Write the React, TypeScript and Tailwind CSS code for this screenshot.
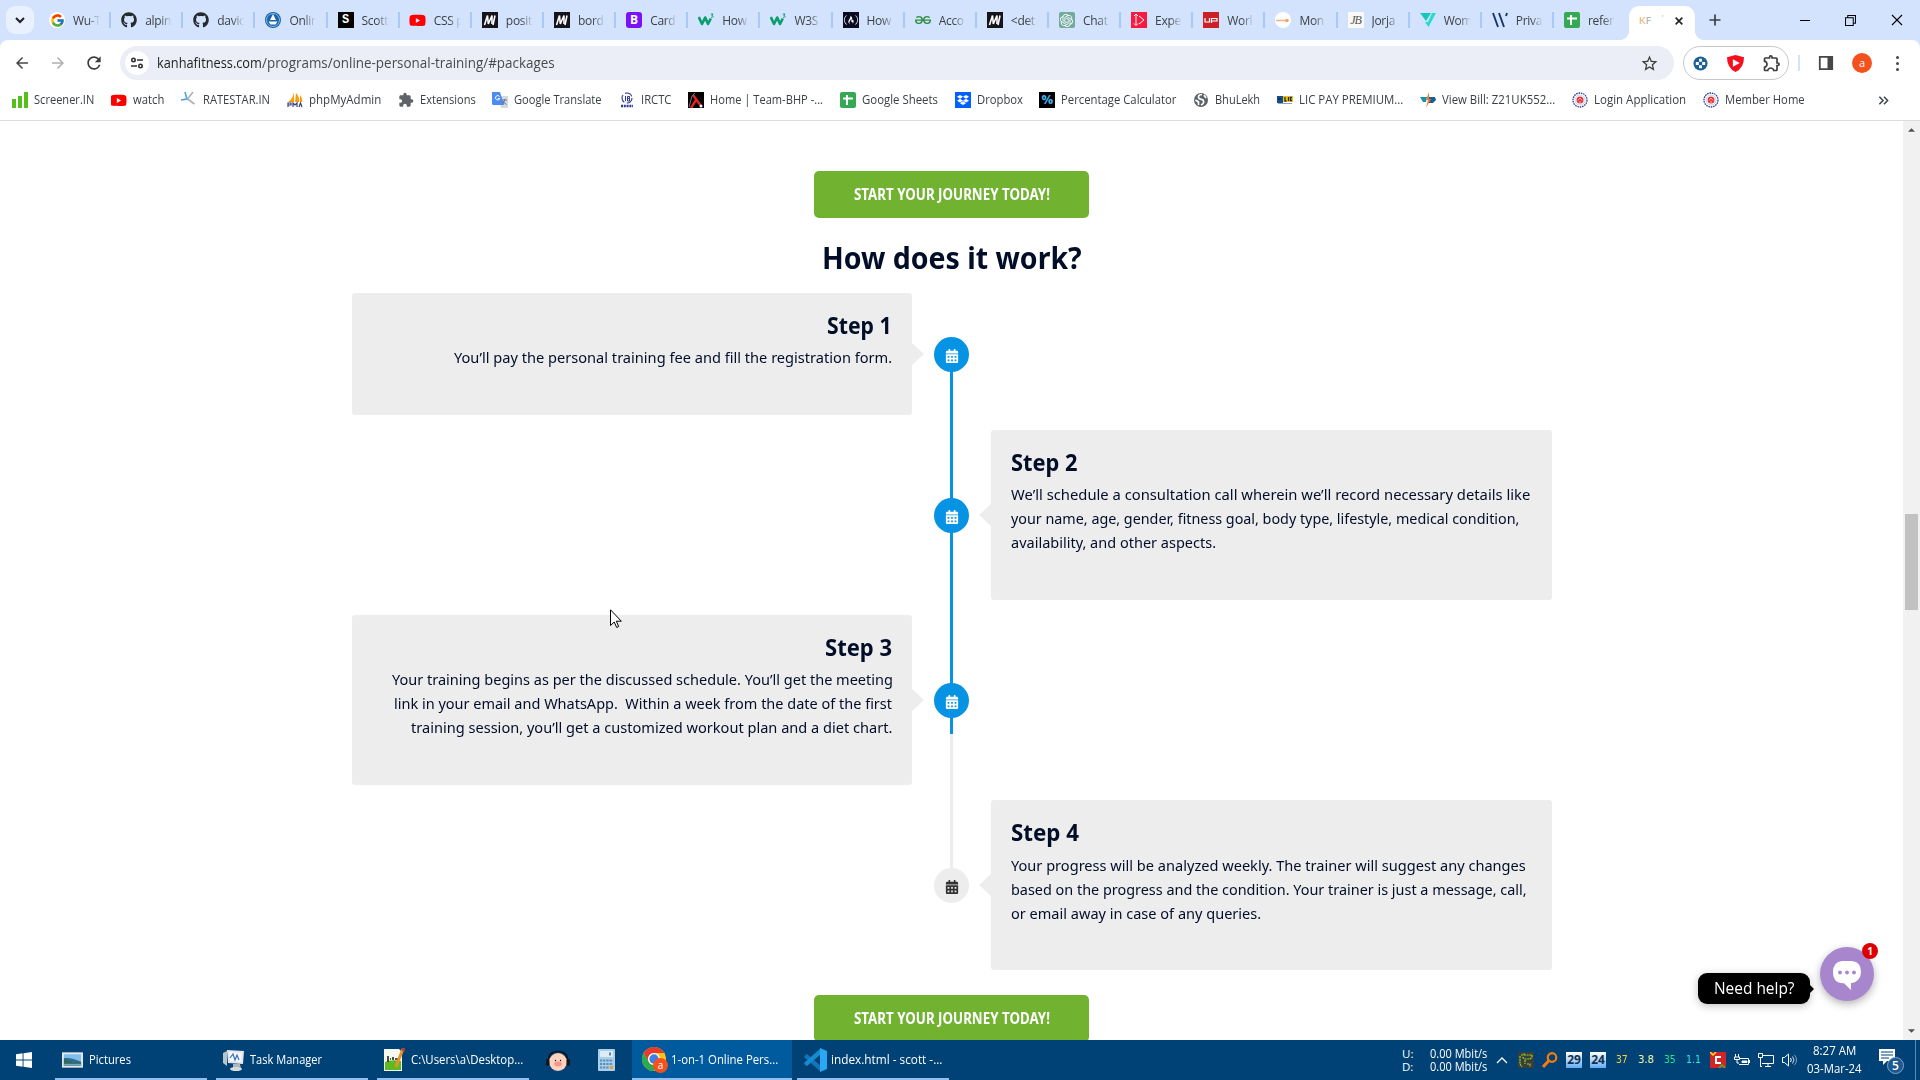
import { useLayoutEffect, useRef, useState, type ReactNode } from "react";
import { FaCalendarAlt, FaFreeCodeCamp, FaGithub, FaYoutube, FaDropbox } from "react-icons/fa";
import { FcGoogle } from "react-icons/fc";
import { SiGeeksforgeeks, SiOpenai } from "react-icons/si";
import { MdExtension, MdOutlineExtension, MdStarBorder, MdRefresh, MdArrowBack, MdArrowForward } from "react-icons/md";

/* Condenses or widens one line of text so that it takes exactly w pixels. */
function Fit({ w, children, className = "", right = false }: { w: number; children: string; className?: string; right?: boolean }) {
  const ref = useRef<HTMLSpanElement>(null);
  const [scale, setScale] = useState(1);
  useLayoutEffect(() => {
    if (ref.current) setScale(w / ref.current.offsetWidth);
  }, [w, children]);
  return (
    <span className={`flex shrink-0 whitespace-pre ${right ? "ml-auto" : ""} ${className}`} style={{ width: w }}>
      <span ref={ref} className="inline-block shrink-0 origin-left" style={{ transform: `scaleX(${scale})` }}>
        {children}
      </span>
    </span>
  );
}

function Sq({ className, children }: { className: string; children?: ReactNode }) {
  return <span className={`flex size-4 shrink-0 items-center justify-center overflow-hidden ${className}`}>{children}</span>;
}

const mdn = (
  <Sq className="bg-[#15141a]">
    <svg viewBox="0 0 16 16" className="size-4" fill="none" stroke="#fff" strokeWidth="1.6">
      <path d="M2.5 13 5.5 3.5 6.3 12 10 3.5 10 12" />
      <path d="M13 3.5 11 13" />
    </svg>
  </Sq>
);
const w3 = (
  <Sq className="">
    <svg viewBox="0 0 16 16" className="size-4" fill="none" stroke="#0a9e6c">
      <path d="M.8 5 4 12 7.2 5.5 10 12 12.8 6.5" strokeWidth="2.6" strokeLinejoin="round" />
      <path d="M12.8 2h2.2l-1.2 1.5c2 0 1.6 2.3-.8 1.8" strokeWidth="1" />
    </svg>
  </Sq>
);
const sheets = (
  <Sq className="rounded-[2px] bg-[#34a853]">
    <svg viewBox="0 0 16 16" className="size-4" fill="none" stroke="#fff" strokeWidth="2">
      <path d="M3 6.5h10M7 3v10" />
    </svg>
  </Sq>
);
const youtube = <FaYoutube className="size-[17px] shrink-0 text-[#f00]" />;
const seal = (
  <svg viewBox="0 0 16 16" className="size-4 shrink-0" fill="none">
    <circle cx="8" cy="8" r="7" stroke="#2b3990" strokeWidth="1.3" strokeDasharray="1.6 .8" />
    <circle cx="8" cy="8" r="5" stroke="#b5c4e2" strokeWidth=".8" />
    <circle cx="8" cy="8" r="3.5" fill="#e3363c" />
    <path d="M6 8.5 8 6l2 2.500M7 10h2" stroke="#f7b6b0" />
  </svg>
);

const tabs: [ReactNode, string][] = [
  [<Sq className="rounded-full bg-white"><FcGoogle className="size-[15px]" /></Sq>, "Wu-T"],
  [<FaGithub className="size-4 text-[#24292f]" />, "alpin"],
  [<FaGithub className="size-4 text-[#24292f]" />, "davic"],
  [
    <Sq className="rounded-full bg-[#1664ae]">
      <svg viewBox="0 0 16 16" className="size-4" fill="#fff"><path d="M8 2 11 8H5zM3.5 9.5h9l-2 3h-5z" /><circle cx="8" cy="8" r="6.5" fill="none" stroke="#8db8e0" /></svg>
    </Sq>,
    "Onlin",
  ],
  [<Sq className="bg-black font-mono text-[12px] font-bold text-white">S</Sq>, "Scott"],
  [youtube, "CSS p"],
  [mdn, "posit"],
  [mdn, "bord"],
  [<Sq className="rounded-[3px] bg-[#7a12f7] text-[12px] font-bold text-white">B</Sq>, "Card"],
  [w3, "How"],
  [w3, "W3S"],
  [<Sq className="bg-[#0a0a23]"><FaFreeCodeCamp className="size-[14px] text-white" /></Sq>, "How"],
  [<SiGeeksforgeeks className="size-4 text-[#2f8d46]" />, "Acco"],
  [mdn, "<det"],
  [<Sq className="rounded-[2px] bg-[#74aa9c]"><SiOpenai className="size-[13px] text-white" /></Sq>, "Chat"],
  [
    <Sq className="bg-[#fa1a40]">
      <svg viewBox="0 0 16 16" className="size-4" fill="none" stroke="#fff"><path d="M5 2v11M3 4l2-2 2 2M3 11.5l2 2 2-2M8 4l5 4-5 4" /></svg>
    </Sq>,
    "Expe",
  ],
  [
    <Sq className="bg-[#cc2027]">
      <svg viewBox="0 0 16 16" className="size-4" fill="none" stroke="#fff" strokeWidth="1.2"><path d="M2 6v4h4.5V6M8.500 11V6.500H14V9H9" /></svg>
    </Sq>,
    "Worl",
  ],
  [
    <Sq className="rounded-full bg-white">
      <svg viewBox="0 0 16 16" className="size-4"><path d="M1 8.500h11" stroke="#f5b183" strokeWidth="1.500" /><circle cx="12" cy="8.500" r="1.800" fill="#f5a36b" /></svg>
    </Sq>,
    "Mon",
  ],
  [<Sq className="bg-[#faf9f7] font-['Liberation_Serif'] text-[12px] italic tracking-[-1px] text-[#555]">JB</Sq>, "Jorja"],
  [
    <svg viewBox="0 0 16 16" className="size-4"><path d="M0 1h11L6 9z" fill="#16c9b7" /><path d="M12 1h4L8.500 15 5 10h3z" fill="#27dccb" /></svg>,
    "Wom",
  ],
  [
    <svg viewBox="0 0 16 16" className="size-4" fill="none" stroke="#16356e" strokeWidth="1.900"><path d="M1 1 6 15M7 1l5 14M15 1l-1 3" /></svg>,
    "Priva",
  ],
  [sheets, "refer"],
];

const bookmarks: [ReactNode, string, number][] = [
  [
    <svg viewBox="0 0 16 16" className="size-4 shrink-0"><path d="M0 7h4v9H0zM6 4h4v12H6zM12 0h4v16h-4z" fill="#55c01c" /></svg>,
    "Screener.IN", 60,
  ],
  [<Sq className="">{youtube}</Sq>, "watch", 31],
  [
    <svg viewBox="0 0 16 16" className="size-4 shrink-0" fill="none"><path d="M4 0 6 7 0 8" stroke="#3fa4dc" strokeWidth="1.600" /><path d="M12 0 6.500 7l7 5" stroke="#aab0b8" strokeWidth="1.600" /></svg>,
    "RATESTAR.IN", 67,
  ],
  [
    <svg viewBox="0 0 16 16" className="size-4 shrink-0"><path d="M7 0v10H1q5-3 6-10M9 1q4 4 3 9H8zM13 3q3 4 2 7h-2z" fill="#f89c0e" /><path d="M1 15v-4h3v2H1M6 15v-4l2 2 2-2v4M12 15l1.500-4 1.500 4" stroke="#3b3f73" strokeWidth="1.200" fill="none" /></svg>,
    "phpMyAdmin", 72,
  ],
  [<MdExtension className="size-4 shrink-0 text-[#5f6368]" />, "Extensions", 55.5],
  [
    <svg viewBox="0 0 16 16" className="size-4 shrink-0"><path d="M6 4h10v12H9z" fill="#d5d8dc" /><path d="M0 0h8l4 13H1l-1-1z" fill="#4c8bf5" /><path d="M7.500 4.500a2.200 2.200 0 1 0 .3 2H5.800" stroke="#fff" fill="none" /><path d="M10 8h5M12.500 7v1.500q-1 3-2.500 4M11 9q1 2 3.500 3.500" stroke="#60758d" fill="none" /></svg>,
    "Google Translate", 88,
  ],
  [
    <svg viewBox="0 0 16 16" className="size-4 shrink-0" fill="none" stroke="#2c3690"><circle cx="8" cy="6" r="5" strokeDasharray="8 2.500" strokeWidth="1.100" /><path d="M6.500 4v5M8.500 4.500h2v2h-2zM8.500 6.500h2V9h-2z" /><path d="M2 14h12" strokeWidth="2.500" strokeDasharray="2 .8" /></svg>,
    "IRCTC", 30,
  ],
  [
    <Sq className="bg-black"><svg viewBox="0 0 16 16" className="size-4" fill="none"><path d="M5 3 13 14M3 16 8 8" stroke="#e02222" strokeWidth="2.400" /><circle cx="13" cy="14" r="1.500" fill="#fff" /><path d="M1 15 4 4l3-3" stroke="#777" /></svg></Sq>,
    "Home | Team-BHP -...", 113,
  ],
  [sheets, "Google Sheets", 76],
  [<Sq className="bg-[#0061ff]"><FaDropbox className="size-[12px] text-white" /></Sq>, "Dropbox", 46],
  [<Sq className="bg-black text-[13px] font-bold text-[#43b5f2]">%</Sq>, "Percentage Calculator", 115],
  [
    <svg viewBox="0 0 16 16" className="size-4 shrink-0"><circle cx="8" cy="8" r="7" fill="#5f6368" /><path d="M9 2.500Q4 3 6 6.500l4 1.500q2 3-2 5M11 3l2 3M2.500 8l3 2v3" stroke="#fff" strokeWidth="1.700" fill="none" /></svg>,
    "BhuLekh", 45,
  ],
  [
    <svg viewBox="0 0 16 16" className="size-4 shrink-0"><path d="M0 4h6v7H0z" fill="#12508f" /><path d="M6 4h10v6H6z" fill="#f4c20f" /><path d="M1 7h3M8 5v4h1.500M11.500 5v4M15 5.500h-1.500v3H15" stroke="#1d2d50" fill="none" strokeWidth="1.300" /><path d="M1 11.500h14" stroke="#8aa4c4" /></svg>,
    "LIC PAY PREMIUM...", 104,
  ],
  [
    <svg viewBox="0 0 16 16" className="size-4 shrink-0"><path d="M0 5h7l-1 5H3z" fill="#1592b0" /><path d="M9 5h6l1 3-3 3H9z" fill="#1d5f91" /><path d="M9 0 6 8h2l-2 8 5-9H9z" fill="#ee7a2b" /></svg>,
    "View Bill: Z21UK552...", 113,
  ],
  [seal, "Login Application", 92],
  [seal, "Member Home", 80],
];

function TabStrip() {
  return (
    <div className="flex h-10 bg-[#d3e3fd]">
      <div className="ml-[6px] mt-[6px] flex h-7 w-7 shrink-0 items-center justify-center rounded-[9px] bg-[#e9f0fe]">
        <svg viewBox="0 0 12 12" className="size-3" fill="none" stroke="#1f1f1f" strokeWidth="2"><path d="M2 4l4 4 4-4" /></svg>
      </div>
      <div className="ml-[5px] flex shrink-0">
        {tabs.map(([icon, label], i) => (
          <div key={i} className="flex h-10 w-[72.15px] shrink-0 items-center pl-[10px]">
            <span className="flex w-4 shrink-0 justify-center">{icon}</span>
            <span className="ml-2 mt-[2px] w-[27px] whitespace-nowrap text-[12px] leading-[18px] tracking-[-0.3px] text-[#3c4043] [mask-image:linear-gradient(to_right,black_55%,transparent)]">
              {label}
            </span>
            <span className={`ml-auto h-4 w-[2px] ${i === 21 ? "bg-transparent" : "bg-[#a8c7fa]"}`} />
          </div>
        ))}
      </div>
      <div className="relative ml-[3px] mt-[6px] flex h-[34px] w-[66px] shrink-0 items-center rounded-t-[10px] bg-white pb-[5px] pl-[10px] text-[9px] before:absolute before:bottom-0 before:-left-[10px] before:size-[10px] before:bg-[radial-gradient(circle_at_0_0,transparent_10px,white_10.500px)] after:absolute after:-right-[10px] after:bottom-0 after:size-[10px] after:bg-[radial-gradient(circle_at_100%_0,transparent_10px,white_10.500px)]">
        <span className="font-['Lato'] text-[10px] text-[#e9b15c]">K</span>
        <span className="font-['Lato'] text-[10px] text-[#aaa]">F</span>
        <span className="-mt-1 ml-[10px] text-[#bbb]">'</span>
        <svg viewBox="0 0 12 12" className="ml-[11px] size-[10px]" stroke="#1f1f1f" strokeWidth="1.900"><path d="M2 2l8 8M10 2l-8 8" /></svg>
      </div>
      <svg viewBox="0 0 12 12" className="ml-[14px] mt-[14px] size-3" stroke="#3c4043" strokeWidth="1.700"><path d="M6 .5v11M.5 6h11" /></svg>
      <div className="ml-auto mr-[17px] flex h-10 items-center gap-[35px]">
        <span className="h-px w-[10px] bg-black" />
        <svg viewBox="0 0 12 12" className="size-[11px]" fill="none" stroke="#000" strokeWidth="1.100"><path d="M.6 3h8.400v8.400H.6zM3 3V.6h8.400V9H9" /></svg>
        <svg viewBox="0 0 12 12" className="size-3" stroke="#000" strokeWidth="1.100"><path d="M1 1l10 10M11 1 1 11" /></svg>
      </div>
    </div>
  );
}

function Toolbar() {
  return (
    <div className="bg-[#d3e3fd]">
      <div className="flex h-[43px] items-center rounded-t-[8px] bg-white pt-[3px]">
        <MdArrowBack className="ml-[13px] size-[18px] text-[#474747]" />
        <MdArrowForward className="ml-[18px] size-[18px] text-[#b0b0b0]" />
        <MdRefresh className="ml-[17px] size-[20px] text-[#3c3c3c]" />
        <div className="ml-4 flex h-[34px] w-[1554px] items-center rounded-full bg-[#ebeef7] pl-[5px]">
          <span className="flex size-6 items-center justify-center rounded-full bg-white">
            <svg viewBox="0 0 14 14" className="size-[14px]" fill="none" stroke="#303030" strokeWidth="1.600"><circle cx="3.500" cy="4" r="1.700" /><path d="M7 4h6M1 10h6" /><circle cx="10.500" cy="10" r="1.700" /></svg>
          </span>
          <Fit w={105} className="mb-px ml-[8px] text-[14px] text-[#1f1f1f]">kanhafitness.com</Fit>
          <Fit w={292.500} className="mb-px text-[14px] text-[#4a4a4f]">/programs/online-personal-training/#packages</Fit>
          <MdStarBorder className="ml-auto mr-[15px] size-[19px] text-[#3c3c3c]" />
        </div>
        <div className="ml-[9px] flex h-[34px] w-[106px] items-center justify-between rounded-full border border-[#c7c7c7] pl-[9px] pr-[6px]">
          <svg viewBox="0 0 16 16" className="size-[15px]"><circle cx="8" cy="8" r="7.500" fill="#1b6290" /><path d="M8 3v3.200M8 9.800V13M3 8h3.200M9.800 8H13" stroke="#fff" strokeWidth="3" /></svg>
          <svg viewBox="0 0 16 16" className="size-[17px]"><path d="M0 2 8 0l8 2q0 10-8 14Q0 12 0 2" fill="#f4101c" /><path d="M5.500 4 12 7.500 5.500 11z" fill="#fff" /></svg>
          <MdOutlineExtension className="size-[20px] text-[#3c3c3c]" />
        </div>
        <span className="ml-[9px] h-4 w-[2px] bg-[#d3e3fd]" />
        <svg viewBox="0 0 16 16" className="ml-[18px] size-4"><path d="M1.800 1.800h12.400v12.400H1.800z" fill="none" stroke="#474747" strokeWidth="1.800" /><path d="M9.500 1h5.500v14H9.500z" fill="#474747" /></svg>
        <span className="ml-[18px] flex size-5 items-center justify-center rounded-full bg-[#f4511e] pb-px text-[11px] leading-none text-white">a</span>
        <span className="ml-[24px] flex flex-col gap-[3px]"><i className="size-[3px] rounded-full bg-[#474747]" /><i className="size-[3px] rounded-full bg-[#474747]" /><i className="size-[3px] rounded-full bg-[#474747]" /></span>
      </div>
      <div className="flex h-[38px] items-center gap-[16.9px] border-b border-[#dcdcdf] bg-white pb-[3px] pl-3">
        {bookmarks.map(([icon, label, w]) => (
          <div key={label} className="flex items-center gap-[6px]">
            {icon}
            <Fit w={w} className="text-[12px] leading-4 text-[#3c4043]">{label}</Fit>
          </div>
        ))}
        <svg viewBox="0 0 12 12" className="ml-auto mr-[31px] size-[11px]" fill="none" stroke="#3c4043" strokeWidth="1.600"><path d="M1.500 2l4 4-4 4M6.500 2l4 4-4 4" /></svg>
      </div>
    </div>
  );
}

function JourneyButton() {
  return (
    <button className="mx-auto flex h-[47px] w-[275px] shrink-0 items-center justify-center rounded-[5px] bg-[#71b230] pt-px text-[15.500px] font-bold text-white">
      <Fit w={196}>START YOUR JOURNEY TODAY!</Fit>
    </button>
  );
}

type Step = { title: string; tw: number; lines: [string, number][]; left: boolean; active: boolean };

const steps: Step[] = [
  { title: "Step 1", tw: 65, left: true, active: true, lines: [["You’ll pay the personal training fee and fill the registration form.", 438]] },
  {
    title: "Step 2", tw: 67, left: false, active: true,
    lines: [
      ["We’ll schedule a consultation call wherein we’ll record necessary details like", 519],
      ["your name, age, gender, fitness goal, body type, lifestyle, medical condition,", 508],
      ["availability, and other aspects.", 205],
    ],
  },
  {
    title: "Step 3", tw: 67.5, left: true, active: true,
    lines: [
      ["Your training begins as per the discussed schedule. You’ll get the meeting", 500.5],
      ["link in your email and WhatsApp.  Within a week from the date of the first", 498.5],
      ["training session, you’ll get a customized workout plan and a diet chart.", 481],
    ],
  },
  {
    title: "Step 4", tw: 68.5, left: false, active: false,
    lines: [
      ["Your progress will be analyzed weekly. The trainer will suggest any changes", 515],
      ["based on the progress and the condition. Your trainer is just a message, call,", 516],
      ["or email away in case of any queries.", 250],
    ],
  },
];

function StepRow({ step }: { step: Step }) {
  const card = (
    <div className={`relative rounded-[3px] bg-[#ededed] px-5 pt-[17px] ${step.left ? "w-[560px]" : "w-[561px]"} ${step.lines.length === 1 ? "h-[122px]" : "h-[170px]"}`}>
      <Fit w={step.tw} right={step.left} className="text-[22.500px] font-bold leading-8 text-[#020e28]">{step.title}</Fit>
      <div className={step.active ? "mt-[3px]" : "mt-[4px]"}>
        {step.lines.map(([text, w]) => (
          <Fit key={text} w={w} right={step.left} className="text-[15px] leading-6 text-[#020e28]">{text}</Fit>
        ))}
      </div>
      <svg viewBox="0 0 12 22" className={`absolute top-1/2 h-[22px] w-3 -translate-y-1/2 fill-[#ededed] ${step.left ? "-right-[12px]" : "-left-[12px] rotate-180"}`}>
        <path d="M0 0 12 11 0 22z" />
      </svg>
    </div>
  );
  return (
    <div className="flex items-center">
      {step.left ? card : <div className="w-[560px]" />}
      <div className="flex w-[79px] justify-center">
        <span className={`z-10 flex size-[35px] items-center justify-center rounded-full pt-[3px] ${step.active ? "bg-[#0693e3] text-white" : "bg-[#ededed] text-[#333]"}`}>
          <FaCalendarAlt className="size-[14px]" />
        </span>
      </div>
      {!step.left && card}
    </div>
  );
}

function ChatWidget() {
  return (
    <div className="absolute bottom-[36px] right-[46px] flex items-end">
      <div className="relative mr-[10px] flex h-[31px] w-[112px] items-center justify-center rounded-[9px] bg-black text-white shadow-[0_2px_8px_rgba(0,0,0,0.25)] after:absolute after:-right-[4px] after:top-[11px] after:border-y-[5px] after:border-l-[5px] after:border-y-transparent after:border-l-black">
        <Fit w={81} className="pb-px text-[16px]">Need help?</Fit>
      </div>
      <div className="relative mb-[3px] flex size-[54px] items-center justify-center rounded-full bg-[#a886cd] shadow-[0_3px_8px_rgba(0,0,0,0.3)]">
        <svg viewBox="0 0 28 29" className="mt-[3px] h-[29px] w-7"><path d="M9 0h10q9 1 9 10.500T19 22h-1v7l-7-6.800Q0 22.500 0 11 0 1 9 0" fill="#fff" /><circle cx="7" cy="11.500" r="1.900" fill="#a886cd" /><circle cx="14" cy="11.500" r="1.900" fill="#a886cd" /><circle cx="21" cy="11.500" r="1.900" fill="#a886cd" /></svg>
        <span className="absolute -right-[4px] -top-[4px] flex size-4 items-center justify-center rounded-full bg-[#dd0000] text-[10px] font-bold leading-none text-white">1</span>
      </div>
    </div>
  );
}

function Page() {
  return (
    <div className="relative flex h-[919px] overflow-hidden bg-white">
      <main className="flex w-[1903px] flex-col overflow-hidden pt-[50px] font-['Noto_Sans',sans-serif]">
        <JourneyButton />
        <h2 className="mx-auto mt-[19px] h-[56px] shrink-0 text-[30px] font-bold leading-[42px] text-[#020e28]">
          <Fit w={260}>How does it work?</Fit>
        </h2>
        <div className="relative ml-[352px] flex w-[1200px] shrink-0 flex-col gap-[15px]">
          {steps.map((s) => (
            <StepRow key={s.title} step={s} />
          ))}
          <div className="absolute left-[598px] top-[61px] h-[531px] w-[3px] bg-[#ededed]">
            <div className="h-[380px] bg-[#0693e3]" />
          </div>
        </div>
        <div className="mt-[25px] shrink-0">
          <JourneyButton />
        </div>
      </main>
      <div className="flex w-[17px] flex-col items-center bg-[#f1f1f1]">
        <svg viewBox="0 0 8 4" className="mt-[7px] h-1 w-[7px] shrink-0 fill-[#505050]"><path d="M4 0l4 4H0z" /></svg>
        <div className="mt-[382px] h-[96px] w-[13px] shrink-0 bg-[#c1c1c1]" />
        <svg viewBox="0 0 8 4" className="mb-[7px] mt-auto h-1 w-[7px] shrink-0 fill-[#505050]"><path d="M0 0h8L4 4z" /></svg>
      </div>
      <ChatWidget />
      <svg viewBox="0 0 12 19" className="absolute left-[610px] top-[488px] h-[19px] w-3"><path d="M.5.800v15.700l3.700-3.500 2.500 5.500 2-1-2.400-5.300h5z" fill="#fff" stroke="#000" /></svg>
    </div>
  );
}

function Task({ icon, label, w, className = "" }: { icon: ReactNode; label: string; w: number; className?: string }) {
  return (
    <div className={`flex h-10 items-center border-b-2 border-[#92c0ee] pt-[1px] ${className}`}>
      {icon}
      <Fit w={w} className="ml-[6px] text-[12px] leading-4 text-white">{label}</Fit>
    </div>
  );
}

function Taskbar() {
  return (
    <div className="flex h-10 items-center bg-[#004275] text-[12px] text-white">
      <svg viewBox="0 0 16 16" className="ml-4 size-4 fill-white"><path d="M0 2.300 6.600 1.300v6.200H0zM7.500 1.200 16 0v7.500H7.500zM0 8.500h6.600v6.200L0 13.700zM7.500 8.500H16V16l-8.500-1.200z" /></svg>
      <Task className="ml-[23px] w-[152px] pl-[7px]" label="Pictures" w={42} icon={
        <svg viewBox="0 0 22 16" className="h-4 w-[21px]"><path d="M0 0h22v16H0z" fill="#e6e9ec" /><path d="M2 2h18v12H2z" fill="#7fbdea" /><path d="M2 6q8-1 18 4v4H2z" fill="#2d6c9a" /><path d="M2 7q6 2 10 4l8-1v4H2z" fill="#2f6b4f" /><path d="M2 12h18v2H2z" fill="#79a7c5" /></svg>
      } />
      <Task className="ml-[9px] w-[152px] pl-[7px]" label="Task Manager" w={72} icon={
        <svg viewBox="0 0 22 22" className="-mr-px size-[22px]"><path d="M0 4l4-2v15l-4-3z" fill="#b9c4cc" /><path d="M4 1l17 1-1 13-15-1z" fill="#e3e7e9" /><path d="M6 3l13 1-1 9-11-1z" fill="#f4f8fc" /><path d="M7 9l3-4 2 6 2-5 2 5" stroke="#3172bd" strokeWidth="1.200" fill="none" /><path d="M10 15h7l1 5-8 1z" fill="#b0b7bc" /><ellipse cx="13" cy="20" rx="6" ry="2" fill="#d8dcdf" /></svg>
      } />
      <Task className="ml-[9px] w-[152px] pl-[7px]" label="C:\Users\a\Desktop..." w={112} icon={
        <svg viewBox="0 0 21 24" className="h-6 w-[21px]"><path d="M0 1h15l3 3v19H0z" fill="#f5f8ee" /><path d="M1 14q7-3 16-1v9H1z" fill="#5fba21" /><path d="M4 8v6M6 11h1M9 9v3M11 11h3" stroke="#222" strokeWidth="1.600" /><path d="M19 1 13 16l-1 3" stroke="#e8912a" strokeWidth="3" /><path d="M20 0l-1 3" stroke="#c33" strokeWidth="3" /></svg>
      } />
      <svg viewBox="0 0 24 22" className="ml-[17px] mt-px h-[22px] w-6"><path d="M2.500 12Q2 1.500 12 1.500T21.500 12" stroke="#10131a" strokeWidth="1.600" fill="none" /><circle cx="12" cy="12" r="9" fill="#fbd3bf" /><rect x="0" y="9" width="3.500" height="7" rx="1.700" fill="#15171c" /><rect x="20.500" y="9" width="3.500" height="7" rx="1.700" fill="#15171c" /><ellipse cx="12" cy="14" rx="3.800" ry="2.400" fill="#f4948c" /><circle cx="9.500" cy="10.500" r=".7" /><circle cx="14.500" cy="10.500" r=".7" /></svg>
      <svg viewBox="0 0 17 22" className="ml-[28px] h-[22px] w-[17px]"><rect width="17" height="22" rx="1" fill="#a9cfe9" /><path d="M2 2h13v6H2z" fill="#dcecf7" /><path d="M12 3.500v3" stroke="#44617c" strokeWidth="1.500" /><path d="M2 11.500h13M2 15h13M2 18.500h9" stroke="#5b8db3" strokeWidth="2" strokeDasharray="2.200 1" /><path d="M12 17h3v3h-3z" fill="#f09a35" /></svg>
      <Task className="ml-[17px] w-[160px] bg-[#005a9e] pl-[10px]" label="1-on-1 Online Pers..." w={107} icon={
        <svg viewBox="0 0 26 26" className="-mr-[3px] size-[26px]"><circle cx="12" cy="12" r="12" fill="#fbc116" /><path d="M1.600 6a12 12 0 0 1 20.800 0H12a6 6 0 0 0-5.200 9z" fill="#e33b2e" /><path d="M1.600 6A12 12 0 0 0 12 24l5.200-9a6 6 0 0 1-10.400 0z" fill="#2da94f" /><circle cx="12" cy="12" r="6" fill="#fff" /><circle cx="12" cy="12" r="4.700" fill="#3f7ee8" /><circle cx="18.500" cy="18.500" r="7.500" fill="#f4511e" /><text x="18.500" y="22" textAnchor="middle" fontSize="10" fill="#fff">a</text></svg>
      } />
      <Task className="ml-[5px] w-[152px] pl-[6px]" label="index.html - scott -..." w={111} icon={
        <svg viewBox="0 0 24 24" className="-mr-[2px] size-6"><path d="M2 7.500 4 6l14 12v6L1 9z" fill="#1374b8" /><path d="M2 16.500 4 18 18 6V0L1 15z" fill="#178bd2" /><path d="M17 0l7 3v18l-7 3z" fill="#2aa8f2" /></svg>
      } />
      <div className="ml-auto flex h-10 items-center">
        <div className="flex w-[28px] flex-col text-[11.500px] leading-[13px]"><span>U:</span><span>D:</span></div>
        <div className="flex w-[58px] flex-col text-[12px] leading-[13px]"><Fit w={57}>0.00 Mbit/s</Fit><Fit w={57}>0.00 Mbit/s</Fit></div>
        <svg viewBox="0 0 12 8" className="ml-[8px] h-2 w-3" fill="none" stroke="#fff" strokeWidth="1.300"><path d="M1 7l5-5 5 5" /></svg>
        <svg viewBox="0 0 16 16" className="ml-[10px] size-4"><path d="M0 0h16v16H0z" fill="#3b3d3b" /><path d="M3 3h3V1M6 3h8v2l-2 2H7L4 5M2 4v8l2 3M7 8v4M9 12h3v3" fill="none" stroke="#8bd62c" strokeWidth="1.200" strokeDasharray="2 .7" /></svg>
        <svg viewBox="0 0 16 16" className="ml-[8px] size-4" fill="none" stroke="#f57c0c"><circle cx="10" cy="5.500" r="4.300" strokeWidth="2.200" /><path d="M7 8.500 1 15" strokeWidth="3" /></svg>
        <span className="ml-[8px] flex size-4 items-center justify-center bg-linear-to-b from-white to-[#5badf5] text-[12px] font-bold text-[#15304e]">29</span>
        <span className="ml-[8px] flex size-4 items-center justify-center bg-linear-to-b from-white to-[#5badf5] text-[12px] font-bold text-[#15304e]">24</span>
        <div className="mb-px flex font-['DejaVu_Sans'] text-[10px]">
          <Fit w={12} className="ml-[10px] text-[#f5d533]">37</Fit>
          <Fit w={16} className="ml-[10px] text-[#f3f5a0]">3.8</Fit>
          <Fit w={12} className="ml-[10px] text-[#1ee88a]">35</Fit>
          <Fit w={15} className="ml-[10px] text-[#2ce8e6]">1.1</Fit>
        </div>
        <svg viewBox="0 0 16 16" className="ml-[9px] size-4"><rect width="16" height="16" rx="1" fill="#d22626" /><path d="M11 5H6v6h5" fill="none" stroke="#fff" strokeWidth="2" /><path d="M0 0l3 3 3-3" stroke="#ffe033" strokeWidth="1.500" fill="none" /><path d="M9 16l3-3 3 3" stroke="#25c13b" strokeWidth="1.500" fill="none" /></svg>
        <svg viewBox="0 0 16 16" className="ml-[8px] size-4" fill="none" stroke="#fff"><path d="M6 6.500h8.500v6H5M15.500 8v3" /><path d="M8 9h5v1.500H8z" fill="#fff" /><path d="M1.500 2v3M4.500 2v3M.5 5h5v2.500h-5zM3 7.500V11h2" /></svg>
        <svg viewBox="0 0 16 16" className="ml-[8px] size-4" fill="none" stroke="#fff"><path d="M5 3.500h10.500v8H4M7 14.500h6M10 11.500v3" /><path d="M.5 1.500h4v4h-4zM2.500 5.500v9H4" /></svg>
        <svg viewBox="0 0 16 16" className="ml-[8px] size-4" fill="none" stroke="#fff"><path d="M.5 5.500h2l4-3.500v12l-4-3.500h-2z" /><path d="M8.500 6q1.500 2 0 4" /><path d="M10.500 4.500q3 3.500 0 7" opacity=".8" /><path d="M12.500 3q4 5 0 10" opacity=".5" /></svg>
        <div className="ml-[9px] flex w-[55px] flex-col items-center text-[12px] leading-[18px]"><Fit w={43}>8:27 AM</Fit><Fit w={55}>03-Mar-24</Fit></div>
        <div className="relative ml-[17px] h-6 w-[25px]">
          <svg viewBox="0 0 16 16" className="mt-px size-4"><path d="M0 0h16v12H8l-4 4v-4H0z" fill="#fff" /><path d="M2 3h12M2 6h12M2 9h8" stroke="#004275" /></svg>
          <span className="absolute -bottom-[2px] right-0 flex size-[17px] items-center justify-center rounded-full border border-[#7ea6c8] bg-[#1d598f] text-[12px] font-semibold leading-none">5</span>
        </div>
        <span className="ml-[11px] mr-1 h-10 w-px bg-[#5c89b0]" />
      </div>
    </div>
  );
}

export default function App() {
  return (
    <div className="h-[1080px] w-[1920px] overflow-hidden bg-white font-['Open_Sans',sans-serif]">
      <TabStrip />
      <Toolbar />
      <Page />
      <Taskbar />
    </div>
  );
}
